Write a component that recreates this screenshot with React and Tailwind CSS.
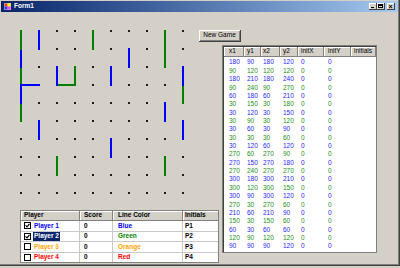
import React from "react";

const lines = [
  [180, 90, 180, 120], [90, 120, 120, 120], [180, 210, 180, 240], [90, 240, 90, 270],
  [60, 180, 60, 210], [30, 150, 30, 180], [30, 120, 30, 150], [30, 90, 30, 120],
  [30, 60, 30, 90], [30, 30, 30, 60], [30, 120, 60, 120], [270, 60, 270, 90],
  [270, 150, 270, 180], [270, 240, 270, 270], [300, 180, 300, 210], [300, 120, 300, 150],
  [300, 90, 300, 120], [270, 30, 270, 60], [210, 60, 210, 90], [150, 30, 150, 60],
  [60, 30, 60, 60], [120, 90, 120, 120], [90, 90, 90, 120],
];

const px = (d) => 20 + (d - 30) * 0.6;
const py = (d) => (d - 30) * 0.6;

function Board() {
  const dots = [];
  for (let i = 0; i < 10; i++)
    for (let j = 0; j < 10; j++)
      dots.push(<rect key={`d${i}-${j}`} x={20 + 18 * i} y={18 * j} width="2" height="2" fill="#1a1a1a" />);
  return (
    <svg width="199" height="180" viewBox="0 0 199 180" className="block overflow-visible">
      {dots}
      {lines.map(([x1, y1, x2, y2], k) => {
        const color = k % 2 === 0 ? "#0000ff" : "#008000";
        const ax = px(Math.min(x1, x2));
        const ay = py(Math.min(y1, y2));
        const w = Math.abs(px(x2) - px(x1)) + 2;
        const h = Math.abs(py(y2) - py(y1)) + 2;
        return <rect key={k} x={ax} y={ay} width={w} height={h} fill={color} />;
      })}
    </svg>
  );
}

const gridCols = [
  { name: "x1", w: "w-[20px] pl-[5px]" },
  { name: "y1", w: "w-[17px] pl-[3px]" },
  { name: "x2", w: "w-[19px] pl-[2px]" },
  { name: "y2", w: "w-[18px] pl-[3px]" },
  { name: "initX", w: "w-[26px] pl-[3px]" },
  { name: "initY", w: "w-[27px] pl-[4px]" },
  { name: "initials", w: "flex-1 pl-[3px]" },
];

function DataGrid() {
  return (
    <div className="w-[155px] h-[208px] bg-white border border-[#808080] shadow-[inset_1px_1px_0_#404040] flex flex-col overflow-hidden">
      <div className="flex h-[10px] mt-[1px] ml-[1px]">
        {gridCols.map((c) => (
          <div
            key={c.name}
            className={`${c.w} h-full bg-[#d4d0c8] border-r border-b border-[#808080] shadow-[inset_1px_1px_0_#ffffff] flex items-center leading-none text-black`}
          >
            {c.name}
          </div>
        ))}
      </div>
      <div className="flex flex-col pt-[1.5px] ml-[1px]">
        {lines.map((r, k) => (
          <div
            key={k}
            className={`flex h-[8.36px] items-center leading-none ${k % 2 === 0 ? "text-[#1f1fff]" : "text-[#1a8f1a]"}`}
          >
            {[r[0], r[1], r[2], r[3], 0, 0, ""].map((v, i) => (
              <div key={i} className={`${gridCols[i].w}`}>
                {v}
              </div>
            ))}
          </div>
        ))}
      </div>
    </div>
  );
}

function Check({ checked }) {
  return (
    <div className="w-[7px] h-[7px] border border-black bg-white flex items-center justify-center shrink-0">
      {checked && (
        <svg width="5" height="5" viewBox="0 0 5 5">
          <path d="M0.5 2.3 L2 3.8 L4.5 0.8" stroke="#000" strokeWidth="1.2" fill="none" />
        </svg>
      )}
    </div>
  );
}

const players = [
  { name: "Player 1", checked: true, cls: "text-[#0000ff]", color: "Blue", ccls: "text-[#0000ff]", init: "P1" },
  { name: "Player 2", checked: true, cls: "text-white bg-[#0a246a]", color: "Green", ccls: "text-[#008000]", init: "P2" },
  { name: "Player 3", checked: false, cls: "text-[#ffa500]", color: "Orange", ccls: "text-[#ffa500]", init: "P3" },
  { name: "Player 4", checked: false, cls: "text-[#ff0000]", color: "Red", ccls: "text-[#ff0000]", init: "P4" },
];

function PlayerTable() {
  const hd = "h-full bg-[#d4d0c8] border-r border-b border-[#808080] shadow-[inset_1px_1px_0_#ffffff] flex items-center leading-none text-black";
  const cell = "h-full border-r border-b border-[#c8c8c8] flex items-center leading-none";
  return (
    <div className="w-[199px] h-[53px] border border-[#808080] bg-white flex flex-col font-bold overflow-hidden">
      <div className="flex h-[10px] shrink-0">
        <div className={`${hd} w-[59px] pl-[3px]`}>Player</div>
        <div className={`${hd} w-[33px] pl-[4px]`}>Score</div>
        <div className={`${hd} w-[70px] pl-[5px]`}>Line Color</div>
        <div className={`${hd} flex-1 pl-[2px] border-r-0`}>Initials</div>
      </div>
      {players.map((p) => (
        <div key={p.name} className="flex h-[10.5px] shrink-0">
          <div className={`${cell} w-[59px] pl-[3px] gap-[2px]`}>
            <Check checked={p.checked} />
            <span className={`${p.cls} px-[1px] h-[9px] flex items-center`}>{p.name}</span>
          </div>
          <div className={`${cell} w-[33px] pl-[4px] text-black`}>0</div>
          <div className={`${cell} w-[70px] pl-[5px] ${p.ccls}`}>{p.color}</div>
          <div className={`${cell} flex-1 pl-[2px] text-black border-r-0`}>{p.init}</div>
        </div>
      ))}
    </div>
  );
}

function TitleButton({ children }) {
  return (
    <div className="w-[8px] h-[7px] bg-[#d4d0c8] border-r border-b border-[#404040] shadow-[inset_1px_1px_0_#ffffff] flex items-center justify-center text-black leading-none">
      {children}
    </div>
  );
}

export default function App() {
  return (
    <div className="w-[400px] h-[268px] bg-[#d4d0c8] overflow-hidden font-['Liberation_Sans',Arial,sans-serif] text-[6.5px] select-none">
      <div className="w-[400px] h-[266px] border-r border-b border-[#404040] shadow-[inset_-1px_-1px_0_#808080] flex flex-col">
        <div className="mt-[1px] mx-[1px] h-[11px] bg-gradient-to-r from-[#0a246a] to-[#a6caf0] flex items-center pl-[3px] pr-[3px]">
          <svg width="7" height="7" viewBox="0 0 7 7" className="shrink-0">
            <rect x="0" y="0" width="7" height="7" fill="#c0c0c0" />
            <rect x="0.5" y="0.5" width="3" height="3" fill="#ff3030" />
            <rect x="3.5" y="0.5" width="3" height="3" fill="#ffff00" />
            <rect x="0.5" y="3.5" width="3" height="3" fill="#2040ff" />
            <rect x="3.5" y="3.5" width="3" height="3" fill="#ff40ff" />
          </svg>
          <span className="ml-[3px] text-white font-bold text-[6.5px] leading-none">Form1</span>
          <div className="ml-auto flex items-center">
            <TitleButton>
              <div className="w-[3px] h-[1px] bg-black mt-[3px]" />
            </TitleButton>
            <TitleButton>
              <div className="w-[5px] h-[4px] border border-black border-t-2" />
            </TitleButton>
            <div className="w-[2px]" />
            <TitleButton>
              <span className="text-[7px] font-bold leading-none">×</span>
            </TitleButton>
          </div>
        </div>
        <div className="grid grid-cols-[199px_23px_155px] grid-rows-[18px_12px_3px_165px_53px]">
          <div className="col-start-1 row-start-2 row-span-3">
            <Board />
          </div>
          <button className="col-start-2 col-span-2 row-start-2 justify-self-start w-[42px] h-[12px] bg-[#d4d0c8] border-r border-b border-[#404040] shadow-[inset_1px_1px_0_#ffffff,inset_-1px_-1px_0_#808080] flex items-center justify-center text-black leading-none text-[6.5px]">
            New Game
          </button>
          <div className="col-start-3 row-start-4 row-span-2 self-start">
            <DataGrid />
          </div>
          <div className="col-start-1 col-span-2 row-start-5 pl-[20px]">
            <PlayerTable />
          </div>
        </div>
      </div>
    </div>
  );
}
